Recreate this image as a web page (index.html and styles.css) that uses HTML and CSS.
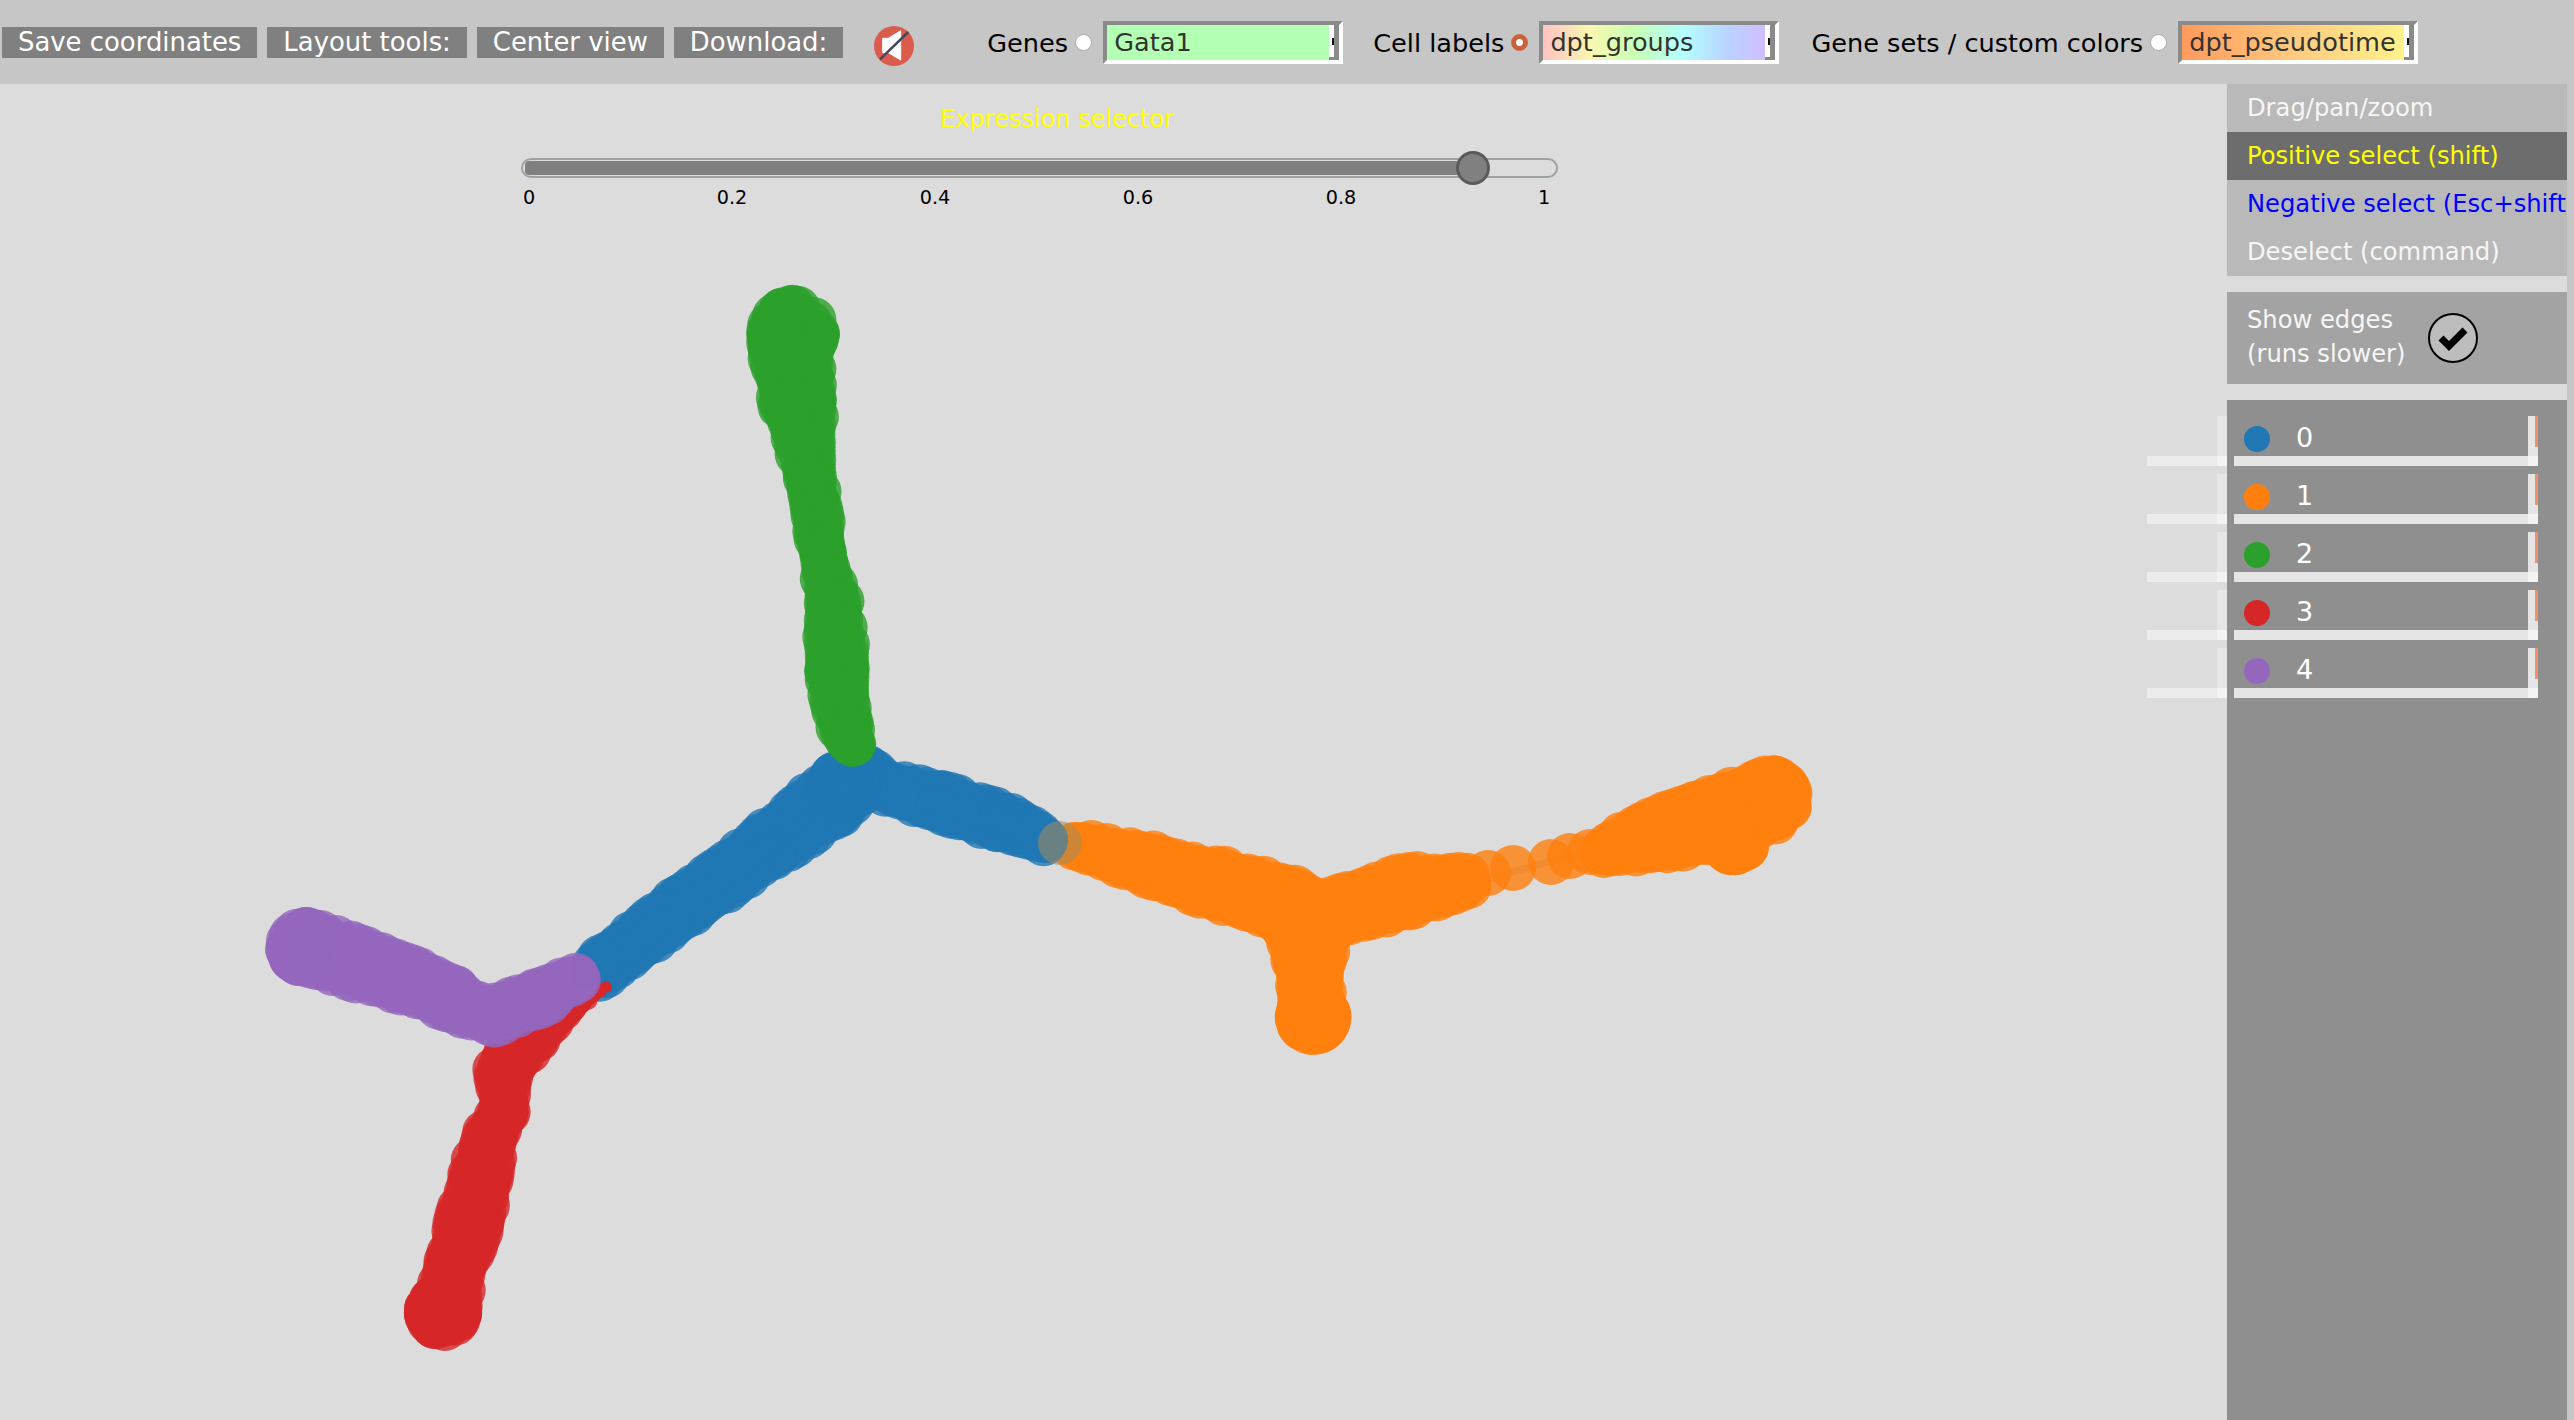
FILE: index.html
```html
<!DOCTYPE html>
<html lang="en">
<head>
    <meta charset="UTF-8">
    <title>SPRING Viewer</title>
    <link rel="stylesheet" href="styles.css">
</head>
<body>
    <header class="topbar">
        <div class="buttons">
            <button>Save coordinates</button>
            <button>Layout tools:</button>
            <button>Center view</button>
            <button>Download:</button>
        </div>
        <svg class="sound-icon" width="40" height="40" viewBox="0 0 40 40">
            <circle cx="20" cy="20" r="20" fill="#db5c4d"/>
            <path d="M8.7 12.3H14.3L26.7 4.7V34L14.3 26.7H8.7Z" fill="#fff" stroke="#fff" stroke-linejoin="round"/>
            <line x1="6" y1="33.3" x2="34.3" y2="6" stroke="#434a60" stroke-width="2.5"/>
        </svg>
        <div class="picker picker-genes">
            <label>Genes</label>
            <input type="radio" name="color-mode">
            <div class="select select-green">
                <span class="select-text">Gata1</span>
                <span class="select-arrow"><i></i></span>
            </div>
        </div>
        <div class="picker">
            <label>Cell labels</label>
            <input type="radio" name="color-mode" checked>
            <div class="select select-rainbow">
                <span class="select-text">dpt_groups</span>
                <span class="select-arrow"><i></i></span>
            </div>
        </div>
        <div class="picker picker-sets">
            <label>Gene sets / custom colors</label>
            <input type="radio" name="color-mode">
            <div class="select select-heat">
                <span class="select-text">dpt_pseudotime</span>
                <span class="select-arrow"><i></i></span>
            </div>
        </div>
    </header>

    <div class="content">
        <main class="canvas">
            <svg id="graph" class="graph" viewBox="0 84 2227 1336"></svg>
            <div class="slider-block">
                <div class="slider-title">Expression selector</div>
                <div class="slider-track">
                    <div class="slider-fill"></div>
                    <div class="slider-handle"></div>
                </div>
                <div class="slider-ticks">
                    <span>0</span>
                    <span>0.2</span>
                    <span>0.4</span>
                    <span>0.6</span>
                    <span>0.8</span>
                    <span>1</span>
                </div>
            </div>
        </main>

        <aside class="sidebar">
            <div class="panel">
                <nav class="menu">
                    <div class="menu-item">Drag/pan/zoom</div>
                    <div class="menu-item active">Positive select (shift)</div>
                    <div class="menu-item negative">Negative select (Esc+shift)</div>
                    <div class="menu-item">Deselect (command)</div>
                </nav>
                <div class="edges">
                    <div class="edges-text">Show edges<br>(runs slower)</div>
                    <svg width="50" height="50" viewBox="0 0 50 50">
                        <circle cx="25" cy="25" r="24" fill="#bdbdbd" stroke="#000" stroke-width="2"/>
                        <polyline points="13,25 21,33 37,17" fill="none" stroke="#000" stroke-width="7"/>
                    </svg>
                </div>
                <div class="clusters">
                    <div class="cluster">
                        <span class="dot dot-0"></span><span class="cluster-name">0</span>
                        <span class="ghost-bar"></span><span class="ghost-post"></span>
                        <span class="bar"></span><span class="post"><i></i></span>
                    </div>
                    <div class="cluster">
                        <span class="dot dot-1"></span><span class="cluster-name">1</span>
                        <span class="ghost-bar"></span><span class="ghost-post"></span>
                        <span class="bar"></span><span class="post"><i></i></span>
                    </div>
                    <div class="cluster">
                        <span class="dot dot-2"></span><span class="cluster-name">2</span>
                        <span class="ghost-bar"></span><span class="ghost-post"></span>
                        <span class="bar"></span><span class="post"><i></i></span>
                    </div>
                    <div class="cluster">
                        <span class="dot dot-3"></span><span class="cluster-name">3</span>
                        <span class="ghost-bar"></span><span class="ghost-post"></span>
                        <span class="bar"></span><span class="post"><i></i></span>
                    </div>
                    <div class="cluster">
                        <span class="dot dot-4"></span><span class="cluster-name">4</span>
                        <span class="ghost-bar"></span><span class="ghost-post"></span>
                        <span class="bar"></span><span class="post"><i></i></span>
                    </div>
                </div>
            </div>
        </aside>
    </div>

    <script src="graph.js"></script>
</body>
</html>
```
FILE: styles.css
```css
* {
    margin: 0;
    padding: 0;
    box-sizing: border-box;
}

html, body {
    height: 100%;
    overflow: hidden;
}

body {
    font-family: "DejaVu Sans", sans-serif;
    display: flex;
    flex-direction: column;
    background-color: #dcdcdc;
}

.topbar {
    height: 84px;
    flex-shrink: 0;
    display: flex;
    align-items: center;
    padding: 1px 0 0 2px;
    background-color: #c6c6c6;
    font-size: 25.6px;
}

.buttons {
    display: flex;
    gap: 10px;
}

button {
    height: 31px;
    padding: 0 16px;
    border: none;
    background-color: #808080;
    color: #fff;
    font-family: inherit;
    font-size: 25.9px;
    line-height: 31px;
}

.sound-icon {
    margin: 7px 0 0 31px;
}

.picker {
    display: flex;
    align-items: center;
    margin-left: 30px;
    color: #000;
}

.picker-genes {
    margin-left: 73px;
}

.picker-sets {
    margin-left: 32px;
}

.picker input {
    appearance: none;
    width: 17px;
    height: 17px;
    margin: 0 11px 0 7px;
    border-radius: 50%;
    border: 1px solid #aaa;
    background-color: #fff;
}

.picker input:checked {
    border-color: #c9623a;
    background: radial-gradient(circle, #fff 3px, #c9623a 4px);
}

.select {
    width: 240px;
    height: 43px;
    display: flex;
    border-style: solid;
    border-width: 4px;
    border-color: #8a8a8a #fff #fff #8a8a8a;
    color: #333;
}

.select-green {
    background-color: #b3ffb3;
}

.select-rainbow {
    background: linear-gradient(to right, #ffc2c2, #fbf7b0, #c8ffb4, #b4ffff, #b9d2ff, #d8b8ff);
}

.select-heat {
    background: linear-gradient(to right, #ff9a5c, #ffcc80, #fff58c);
}

.select-text {
    flex: 1;
    padding-left: 7px;
    line-height: 35px;
    white-space: nowrap;
    overflow: hidden;
}

.select-arrow {
    width: 10px;
    display: flex;
    align-items: center;
    background-color: #fff;
    border-style: solid;
    border-width: 0 5px 3px 0;
    border-color: #8a8a8a;
}

.select-arrow i {
    width: 3px;
    height: 7px;
    margin-left: 3px;
    background-color: #111;
}

.content {
    flex: 1;
    display: flex;
    min-height: 0;
}

.canvas {
    flex: 1;
    position: relative;
    background-color: #dcdcdc;
}

.graph {
    position: absolute;
    top: 0;
    left: 0;
    width: 2227px;
    height: 1336px;
}

.slider-block {
    position: relative;
    width: 1037px;
    margin-left: 521px;
    padding-top: 21px;
}

.slider-title {
    margin-left: 419px;
    height: 28px;
    line-height: 29px;
    font-size: 24px;
    color: #ff0;
}

.slider-track {
    position: relative;
    height: 20px;
    margin-top: 25px;
    border: 2px solid #a0a0a0;
    border-radius: 10px;
    padding: 1px 0 1px 2px;
}

.slider-fill {
    width: 935px;
    height: 14px;
    border-radius: 4px 0 0 4px;
    background-color: #808080;
}

.slider-handle {
    position: absolute;
    left: 933px;
    top: -9px;
    width: 34px;
    height: 34px;
    border-radius: 50%;
    border: 3px solid #5a5a5a;
    background-color: #808080;
}

.slider-ticks {
    display: flex;
    justify-content: space-between;
    padding: 8px 0 0 0;
    margin: 0 -6px 0 -12px;
    font-size: 19.2px;
    line-height: 24px;
    color: #000;
}

.slider-ticks span {
    width: 40px;
    text-align: center;
}

.sidebar {
    width: 347px;
    flex-shrink: 0;
    padding-right: 7px;
    background-color: #c6c6c6;
}

.panel {
    height: 100%;
    display: flex;
    flex-direction: column;
    gap: 16px;
    background-color: #dcdcdc;
    font-size: 24.2px;
    color: #f6f6f6;
}

.menu-item {
    height: 48px;
    padding-left: 20px;
    line-height: 48px;
    background-color: #b9b9b9;
    white-space: nowrap;
    overflow: hidden;
}

.menu-item.active {
    background-color: #6d6d6d;
    color: #ff0;
}

.menu-item.negative {
    color: #00f;
}

.edges {
    height: 92px;
    display: flex;
    align-items: center;
    gap: 22px;
    padding-left: 20px;
    line-height: 34px;
    background-color: #a3a3a3;
}

.edges-text {
    margin-top: -3px;
}

.clusters {
    flex: 1;
    padding-top: 8px;
    background-color: #8f8f8f;
}

.cluster {
    position: relative;
    height: 58px;
    display: flex;
    align-items: flex-start;
    padding: 18px 0 0 17px;
}

.dot {
    width: 26px;
    height: 26px;
    border-radius: 50%;
}

.dot-0 { background-color: #1f77b4; }
.dot-1 { background-color: #ff7f0e; }
.dot-2 { background-color: #2ca02c; }
.dot-3 { background-color: #d62728; }
.dot-4 { background-color: #9467bd; }

.cluster-name {
    margin: -2px 0 0 26px;
    font-size: 27px;
    line-height: 28px;
    color: #fff;
}

.bar {
    position: absolute;
    left: 7px;
    right: 29px;
    bottom: 0;
    height: 10px;
    background-color: #e5e5e5;
}

.post {
    position: absolute;
    right: 29px;
    top: 8px;
    bottom: 0;
    width: 10px;
    background: linear-gradient(#e5e5e5 40px, #f3f3f3 40px);
}

.post i {
    position: absolute;
    top: 0;
    right: 0;
    width: 3px;
    height: 31px;
    background-color: #f0906a;
}

.ghost-bar {
    position: absolute;
    left: -80px;
    bottom: 0;
    width: 80px;
    height: 10px;
    background-color: #ebebeb;
}

.ghost-post {
    position: absolute;
    left: -10px;
    top: 8px;
    bottom: 0;
    width: 10px;
    background: linear-gradient(#e6e6e6 40px, #f3f3f3 40px);
}
```
FILE: graph.js
```js
// force layout drawn as overlapping cells, one list of [x, y, half width] per branch
const CELL_R = 23;
const NS = "http://www.w3.org/2000/svg";
const graph = document.getElementById("graph");

let seed = 42;
function rand() {
    seed = (seed * 16807) % 2147483647;
    return seed / 2147483647;
}

function addCell(x, y, r, color, opacity) {
    const c = document.createElementNS(NS, "circle");
    c.setAttribute("cx", x.toFixed(1));
    c.setAttribute("cy", y.toFixed(1));
    c.setAttribute("r", r);
    c.setAttribute("fill", color);
    c.setAttribute("opacity", opacity || 0.8);
    graph.appendChild(c);
}

function addEdge(x1, y1, x2, y2) {
    const l = document.createElementNS(NS, "line");
    l.setAttribute("x1", x1);
    l.setAttribute("y1", y1);
    l.setAttribute("x2", x2);
    l.setAttribute("y2", y2);
    l.setAttribute("stroke", "#777");
    l.setAttribute("stroke-width", 7);
    l.setAttribute("opacity", 0.35);
    graph.appendChild(l);
}

function drawBranch(points, color) {
    for (let i = 0; i < points.length - 1; i++) {
        const [x1, y1, w1] = points[i];
        const [x2, y2, w2] = points[i + 1];
        const len = Math.hypot(x2 - x1, y2 - y1);
        const steps = Math.max(1, Math.round(len / 8));
        const nx = -(y2 - y1) / len;
        const ny = (x2 - x1) / len;
        for (let s = 0; s <= steps; s++) {
            const t = s / steps;
            const x = x1 + (x2 - x1) * t;
            const y = y1 + (y2 - y1) * t;
            const w = w1 + (w2 - w1) * t;
            const r = Math.min(CELL_R, w);
            const off = Math.max(0, w - r);
            [-1, 1, 0].forEach(side => {
                // uneven edge, so the outline stays scalloped
                const d = side * (off + (rand() - 0.6) * 5);
                addCell(x + nx * d, y + ny * d, r, color);
            });
        }
    }
}

// a lump at the tip of a branch
function drawBlob(cx, cy, r, color) {
    for (let i = 0; i < 60; i++) {
        const a = rand() * Math.PI * 2;
        const d = (r - CELL_R) * (i % 2 ? 0.95 : rand());
        addCell(cx + Math.cos(a) * d, cy + Math.sin(a) * d, CELL_R, color);
    }
}

// orange
addEdge(1490, 878, 1600, 848);
drawBranch([[1075, 845, 26], [1150, 865, 33], [1220, 885, 38], [1290, 905, 40], [1316, 925, 46]], "#ff7f0e");
drawBranch([[1308, 925, 48], [1308, 960, 38], [1311, 985, 34], [1313, 1018, 38]], "#ff7f0e");
drawBlob(1313, 1017, 39, "#ff7f0e");
drawBranch([[1330, 915, 36], [1411, 890, 38], [1468, 882, 29]], "#ff7f0e");
[[1488, 873], [1513, 868], [1551, 862], [1570, 856], [1590, 852]].forEach(p => addCell(p[0], p[1], 23, "#ff7f0e"));
drawBranch([[1603, 852, 26], [1647, 838, 38], [1702, 823, 43], [1768, 800, 44]], "#ff7f0e");
drawBlob(1770, 798, 44, "#ff7f0e");
drawBlob(1735, 838, 38, "#ff7f0e");

// blue
drawBranch([[868, 768, 23], [880, 785, 28], [939, 802, 32], [1000, 821, 31], [1045, 840, 25]], "#1f77b4");
drawBranch([[858, 782, 34], [830, 800, 39], [767, 847, 35], [686, 904, 33], [606, 965, 31], [596, 975, 28]], "#1f77b4");
drawBlob(843, 786, 38, "#1f77b4");
addCell(1060, 843, 22, "#a58a5a", 0.55);

// green
drawBlob(793, 332, 48, "#2ca02c");
drawBranch([[790, 340, 45], [798, 403, 39], [811, 477, 27], [823, 553, 25], [833, 603, 30], [837, 670, 34], [845, 725, 28], [852, 745, 22]], "#2ca02c");

// red
drawBranch([[606, 986, 5], [580, 1002, 11], [554, 1012, 24], [531, 1034, 30], [503, 1069, 29], [505, 1112, 26], [491, 1134, 28], [480, 1177, 33], [471, 1220, 36], [457, 1264, 32], [445, 1310, 36]], "#d62728");
drawBlob(443, 1312, 40, "#d62728");

// purple
drawBlob(305, 947, 41, "#9467bd");
drawBranch([[315, 950, 40], [399, 977, 36], [451, 999, 33], [491, 1017, 30], [537, 998, 31], [577, 978, 24]], "#9467bd");
```
